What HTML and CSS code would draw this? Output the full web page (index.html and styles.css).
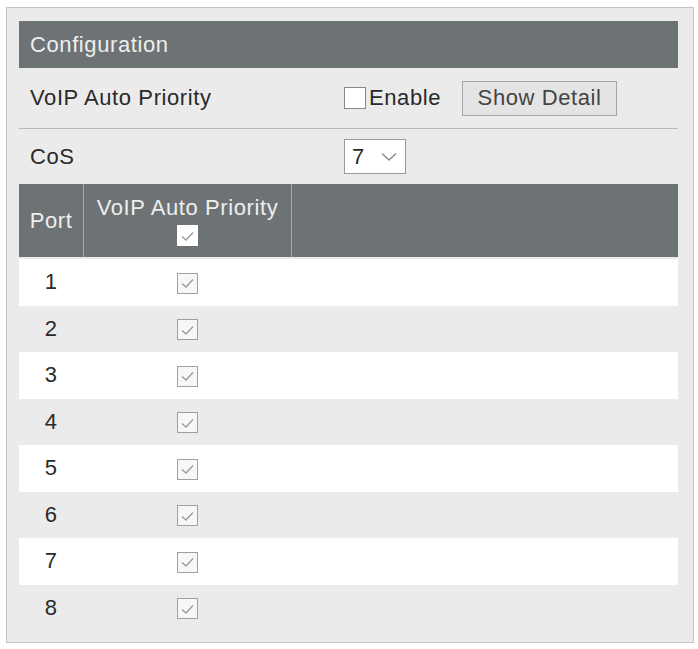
FILE: index.html
```html
<!DOCTYPE html>
<html lang="en">
<head>
    <meta charset="utf-8">
    <meta name="viewport" content="width=device-width, initial-scale=1.0">
    <title>VoIP Auto Priority</title>
    <link rel="stylesheet" href="styles.css">
</head>
<body>
    <div class="panel">
        <div class="panel-title">Configuration</div>
        <div class="setting with-line">
            <span class="setting-label">VoIP Auto Priority</span>
            <div class="setting-value">
                <label class="enable"><span class="box"></span>Enable</label>
                <button type="button" class="btn">Show Detail</button>
            </div>
        </div>
        <div class="setting cos">
            <span class="setting-label">CoS</span>
            <div class="setting-value">
                <div class="select">
                    <span>7</span>
                    <svg width="16" height="10" viewBox="0 0 16 10"><path d="M1 1.5 L8 8 L15 1.5" fill="none" stroke="#8a8a8a" stroke-width="1.4"/></svg>
                </div>
            </div>
        </div>
        <table class="ports">
            <thead>
                <tr>
                    <th class="col-port">Port</th>
                    <th class="col-voip">VoIP Auto Priority<br><span class="check head-check"><svg width="15" height="12" viewBox="0 0 15 12"><path d="M2 6.5 L6 10 L13 2.5" fill="none" stroke="#999" stroke-width="1.3"/></svg></span></th>
                    <th></th>
                </tr>
            </thead>
            <tbody>
                <tr><td>1</td><td><span class="check"><svg width="15" height="12" viewBox="0 0 15 12"><path d="M2 6.5 L6 10 L13 2.5" fill="none" stroke="#999" stroke-width="1.3"/></svg></span></td><td></td></tr>
                <tr><td>2</td><td><span class="check"><svg width="15" height="12" viewBox="0 0 15 12"><path d="M2 6.5 L6 10 L13 2.5" fill="none" stroke="#999" stroke-width="1.3"/></svg></span></td><td></td></tr>
                <tr><td>3</td><td><span class="check"><svg width="15" height="12" viewBox="0 0 15 12"><path d="M2 6.5 L6 10 L13 2.5" fill="none" stroke="#999" stroke-width="1.3"/></svg></span></td><td></td></tr>
                <tr><td>4</td><td><span class="check"><svg width="15" height="12" viewBox="0 0 15 12"><path d="M2 6.5 L6 10 L13 2.5" fill="none" stroke="#999" stroke-width="1.3"/></svg></span></td><td></td></tr>
                <tr><td>5</td><td><span class="check"><svg width="15" height="12" viewBox="0 0 15 12"><path d="M2 6.5 L6 10 L13 2.5" fill="none" stroke="#999" stroke-width="1.3"/></svg></span></td><td></td></tr>
                <tr><td>6</td><td><span class="check"><svg width="15" height="12" viewBox="0 0 15 12"><path d="M2 6.5 L6 10 L13 2.5" fill="none" stroke="#999" stroke-width="1.3"/></svg></span></td><td></td></tr>
                <tr><td>7</td><td><span class="check"><svg width="15" height="12" viewBox="0 0 15 12"><path d="M2 6.5 L6 10 L13 2.5" fill="none" stroke="#999" stroke-width="1.3"/></svg></span></td><td></td></tr>
                <tr><td>8</td><td><span class="check"><svg width="15" height="12" viewBox="0 0 15 12"><path d="M2 6.5 L6 10 L13 2.5" fill="none" stroke="#999" stroke-width="1.3"/></svg></span></td><td></td></tr>
            </tbody>
        </table>
    </div>
</body>
</html>
```

FILE: styles.css
```css
body {
    margin: 0;
    background-color: #fff;
    font-family: "Liberation Sans", Arial, sans-serif;
    font-size: 22px;
    letter-spacing: 0.6px;
    color: #2a2a2a;
}
.panel {
    margin: 7px 0 0 6px;
    width: 659px;
    padding: 13px 15px 11px 12px;
    background-color: #ebebeb;
    border: 1px solid #c2c2c2;
}
.panel-title {
    height: 47px;
    line-height: 47px;
    padding-left: 11px;
    background-color: #6d7374;
    color: #eeeeee;
}
.setting {
    display: grid;
    grid-template-columns: 325px 1fr;
    align-items: center;
    height: 60px;
}
.setting.with-line {
    border-bottom: 1px solid #b9b9b9;
}
.setting.cos {
    height: 55px;
}
.setting-label {
    padding-left: 11px;
}
.setting-value {
    display: flex;
    align-items: center;
}
.enable {
    display: flex;
    align-items: center;
}
.enable .box {
    width: 20px;
    height: 20px;
    background-color: #fff;
    border: 1px solid #888;
    margin-right: 3px;
}
.btn {
    margin-left: 21px;
    width: 155px;
    height: 35px;
    padding: 0;
    font-family: inherit;
    font-size: 22px;
    letter-spacing: 0.6px;
    color: #444;
    background-color: #e4e4e4;
    border: 1px solid #a6a6a6;
}
.select {
    display: flex;
    align-items: center;
    justify-content: space-between;
    box-sizing: border-box;
    width: 62px;
    height: 35px;
    padding: 0 8px 0 7px;
    background-color: #fff;
    border: 1px solid #9a9a9a;
}
.ports {
    width: 100%;
    border-collapse: collapse;
}
.ports th {
    height: 73px;
    padding: 0;
    background-color: #6d7374;
    color: #eeeeee;
    font-weight: normal;
    border-bottom: 2px solid #ebebeb;
    border-right: 1px solid #a4a8a9;
    line-height: 26px;
}
.ports th:last-child {
    border-right: none;
}
.col-port {
    width: 64px;
}
.col-voip {
    width: 207px;
}
.ports td {
    height: 46.5px;
    padding: 0;
    text-align: center;
}
.ports tbody tr:nth-child(odd) {
    background-color: #fff;
}
.check {
    display: inline-flex;
    align-items: center;
    justify-content: center;
    box-sizing: border-box;
    width: 21px;
    height: 21px;
    vertical-align: middle;
    background-color: #f7f7f7;
    border: 1px solid #a0a0a0;
}
.head-check {
    background-color: #fff;
    border-color: #fff;
    margin-top: 2px;
}
```
